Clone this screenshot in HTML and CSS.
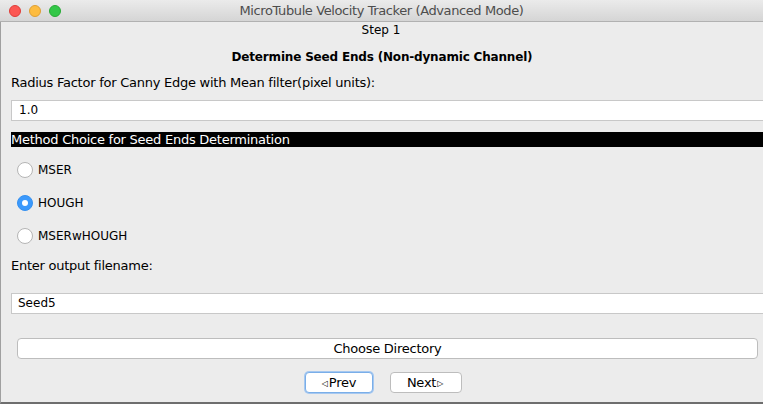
FILE: index.html
```html
<!DOCTYPE html>
<html>
<head>
<meta charset="utf-8">
<link rel="stylesheet" href="styles.css">
</head>
<body>
<div class="window">
  <div class="titlebar">
    <div class="lights">
      <span class="light red"></span>
      <span class="light yellow"></span>
      <span class="light green"></span>
    </div>
    <div class="title">MicroTubule Velocity Tracker (Advanced Mode)</div>
  </div>
  <div class="content">
    <div class="step">Step 1</div>
    <div class="heading">Determine Seed Ends (Non-dynamic Channel)</div>
    <div class="label label-radius">Radius Factor for Canny Edge with Mean filter(pixel units):</div>
    <div class="field field-radius">1.0</div>
    <div class="section-bar">Method Choice for Seed Ends Determination</div>
    <div class="radios">
      <div class="radio-row"><span class="radio"></span><span>MSER</span></div>
      <div class="radio-row"><span class="radio checked"></span><span>HOUGH</span></div>
      <div class="radio-row"><span class="radio"></span><span>MSERwHOUGH</span></div>
    </div>
    <div class="label label-file">Enter output filename:</div>
    <div class="field field-file">Seed5</div>
    <div class="dir-row"><div class="btn btn-wide">Choose Directory</div></div>
    <div class="nav-row">
      <div class="btn btn-nav btn-focus"><span class="arrow">&#9665;</span>Prev</div>
      <div class="btn btn-nav btn-next">Next<span class="arrow">&#9655;</span></div>
    </div>
  </div>
</div>
</body>
</html>
```

FILE: styles.css
```css
html, body {
  margin: 0;
  padding: 0;
  width: 763px;
  height: 404px;
  overflow: hidden;
  background: #ececec;
}

.window {
  width: 763px;
  height: 404px;
  display: flex;
  flex-direction: column;
  font-family: "Lucida Grande", "DejaVu Sans", sans-serif;
  font-size: 13px;
  letter-spacing: -0.25px;
  color: #000;
}

.titlebar {
  height: 21px;
  flex: none;
  display: flex;
  align-items: center;
  position: relative;
  background: linear-gradient(#ebebeb, #d5d5d5);
  border-bottom: 1px solid #b1b1b1;
}

.lights {
  display: flex;
  gap: 8px;
  padding-left: 9px;
  padding-top: 1px;
}

.light {
  width: 12px;
  height: 12px;
  border-radius: 50%;
  box-sizing: border-box;
}
.red { background: #fc5753; border: 1px solid #df3d39; }
.yellow { background: #fdbc40; border: 1px solid #de9f34; }
.green { background: #33c748; border: 1px solid #27aa35; }

.title {
  position: absolute;
  left: 0;
  right: 0;
  top: 0;
  line-height: 22px;
  text-align: center;
  color: #4d4d4d;
  font-size: 13px;
  letter-spacing: -0.4px;
}

.content {
  flex: 1;
  display: flex;
  flex-direction: column;
  border-left: 1px solid #a0a0a0;
  border-bottom: 2px solid #6e6e6e;
  padding-left: 10px;
  overflow: hidden;
}

.step {
  height: 16px;
  line-height: 16px;
  text-align: center;
  padding-right: 12px;
  font-size: 12px;
  letter-spacing: 0;
}

.heading {
  margin-top: 11px;
  height: 16px;
  line-height: 16px;
  text-align: center;
  font-weight: bold;
  font-size: 12px;
  letter-spacing: -0.18px;
  padding-right: 10px;
}

.label {
  height: 16px;
  line-height: 16px;
}
.label-radius { margin-top: 10px; }

.field {
  height: 19px;
  line-height: 19px;
  background: #fff;
  border: 1px solid #c8c8c8;
  border-right: none;
  margin-right: -20px;
  padding-left: 7px;
  font-size: 12px;
  letter-spacing: 0;
}
.field-radius { margin-top: 9px; }
.field-file { margin-top: 19px; padding-left: 6px; }

.section-bar {
  margin-top: 11px;
  height: 15px;
  line-height: 15px;
  background: #000;
  color: #fff;
  margin-right: -20px;
}

.radios {
  display: flex;
  flex-direction: column;
  gap: 17px;
  margin-top: 15px;
  padding-left: 6px;
}

.radio-row {
  display: flex;
  align-items: center;
  gap: 5px;
  height: 16px;
  font-size: 12px;
  letter-spacing: 0;
}

.radio {
  width: 16px;
  height: 16px;
  box-sizing: border-box;
  border-radius: 50%;
  background: #fff;
  border: 1px solid #b5b5b5;
  display: flex;
  align-items: center;
  justify-content: center;
}
.radio.checked {
  background: #3b99fc;
  border-color: #3490f0;
}
.radio.checked::after {
  content: "";
  width: 6px;
  height: 6px;
  border-radius: 50%;
  background: #fff;
}

.label-file { margin-top: 14px; }

.dir-row {
  margin-top: 24px;
  padding-left: 6px;
  padding-right: 5px;
}

.btn {
  box-sizing: border-box;
  background: #fff;
  border: 1px solid #bdbdbd;
  border-radius: 4px;
  text-align: center;
  height: 21px;
  line-height: 19px;
}

.nav-row {
  display: flex;
  justify-content: center;
  gap: 17px;
  margin-top: 13px;
  padding-right: 8px;
}

.btn-nav {
  width: 68px;
  height: 21px;
}
.btn-next { width: 72px; }

.arrow {
  font-size: 8px;
  vertical-align: 1px;
  margin: 0 1px;
}

.btn-focus {
  border-color: #7aaee8;
  box-shadow: 0 0 0 1px #a6c8f0;
}
```
